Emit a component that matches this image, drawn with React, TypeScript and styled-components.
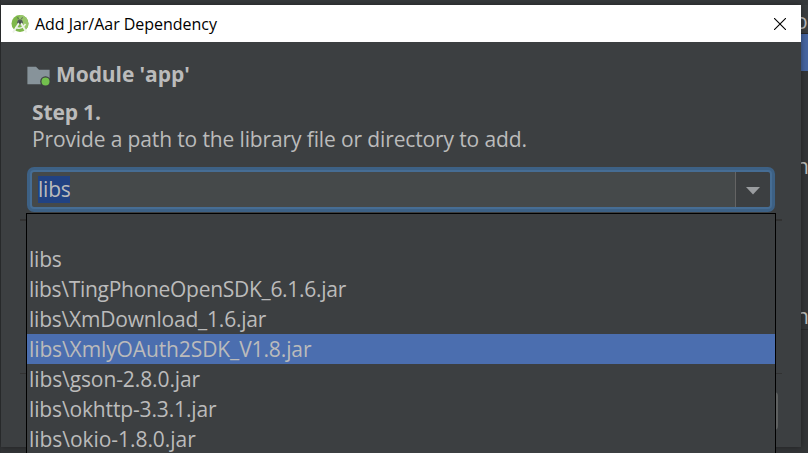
import React from "react";
import styled, { createGlobalStyle } from "styled-components";

const Global = createGlobalStyle`
  * { box-sizing: border-box; }
  body { margin: 0; overflow: hidden; background: #313335; }
`;

const Screen = styled.main`
  position: relative;
  width: 808px;
  height: 453px;
  padding: 5px 7px 6px 1px;
  overflow: hidden;
  background: #303234;
  color: #bbbbbb;
  font-family: "Open Sans", "Noto Sans", sans-serif;
  font-size: 21px;
`;

const Backdrop = styled.div`
  position: absolute;
  inset: 0 0 0 1px;
  display: grid;
  grid-template-rows: 5px 28px 1px 37px 258px 1px 1fr;
`;

const Band = styled.div<{ $color: string }>`
  position: relative;
  background: ${(p) => p.$color};
`;

const Glimpse = styled.span<{ $x: number; $y: number }>`
  position: absolute;
  left: ${(p) => p.$x}px;
  top: ${(p) => p.$y}px;
  line-height: 30px;
`;

const Dialog = styled.section`
  position: relative;
  height: 442px;
  width: 800px;
  display: flex;
  flex-direction: column;
  background: #3c3f41;
  box-shadow: 0 0 6px rgba(0, 0, 0, 0.4);
`;

const TitleBar = styled.header`
  height: 37px;
  flex: none;
  display: flex;
  align-items: center;
  padding: 0 15px 0 9px;
  background: #fff;
  color: #000;
`;

const Title = styled.h1<{ $spacing: number }>`
  flex: 1;
  margin: 0 0 0 5px;
  font-size: 16px;
  font-weight: 400;
  line-height: 22px;
  letter-spacing: ${(p) => p.$spacing}px;
`;

const Body = styled.div`
  flex: 1;
  display: flex;
  flex-direction: column;
  padding: 17px 19px 0;
`;

const ModuleRow = styled.div`
  display: flex;
  align-items: center;
  height: 30px;
  padding-left: 7px;
  gap: 5px;
`;

const FolderIcon = styled.svg`
  margin-top: 4px;
`;

const Strong = styled.div<{ $spacing: number }>`
  font-size: 21px;
  font-weight: 700;
  line-height: 28px;
  letter-spacing: ${(p) => p.$spacing}px;
`;

const Instructions = styled.div`
  margin: 9px 0 0 12px;
`;

const Line = styled.div<{ $spacing?: number }>`
  line-height: 26px;
  white-space: pre;
  letter-spacing: ${(p) => p.$spacing ?? 0}px;
`;

const Combo = styled.div`
  display: flex;
  width: 748px;
  height: 45px;
  margin: 15px 0 0 7px;
  padding: 2px;
  border: 3px solid #3d6185;
  border-radius: 7px;
  background: #466d94;
`;

const Field = styled.div`
  flex: 1;
  display: flex;
  align-items: center;
  padding-left: 6px;
  border-right: 1px solid #646464;
  border-radius: 2px 0 0 2px;
  background: #45494a;
`;

const Selection = styled.span`
  display: block;
  width: 32px;
  height: 27px;
  line-height: 27px;
  letter-spacing: -0.2px;
  background: #214283;
`;

const Arrow = styled.div`
  width: 34px;
  display: flex;
  align-items: center;
  justify-content: center;
  padding-top: 2px;
  border-radius: 0 2px 2px 0;
  background: #3c3f41;
`;

const Rule = styled.hr<{ $top: number; $height: number }>`
  width: 762px;
  height: ${(p) => p.$height}px;
  margin: ${(p) => p.$top}px 0 0;
  border: 0;
  background: #323232;
`;

const Button = styled.div`
  width: 110px;
  height: 38px;
  margin: 18px 4px 0 auto;
  border: 2px solid #5e6060;
  border-radius: 4px;
  background: #4c5052;
`;

const Popup = styled.ul`
  position: absolute;
  left: 26px;
  top: 213px;
  width: 750px;
  height: 260px;
  margin: 0;
  padding: 0;
  list-style: none;
  border: 1px solid #000;
  background: #3c3f41;
`;

const Option = styled.li<{ $selected: boolean; $spacing: number }>`
  height: 30px;
  padding-left: 2px;
  line-height: 30px;
  white-space: pre;
  letter-spacing: ${(p) => p.$spacing}px;
  background: ${(p) => (p.$selected ? "#4b6eaf" : "transparent")};
`;

const options = [
  { label: "", spacing: 0 },
  { label: "libs", spacing: -0.2 },
  { label: "libs\\TingPhoneOpenSDK_6.1.6.jar", spacing: -0.29 },
  { label: "libs\\XmDownload_1.6.jar", spacing: -0.21 },
  { label: "libs\\XmlyOAuth2SDK_V1.8.jar", spacing: -0.11, selected: true },
  { label: "libs\\gson-2.8.0.jar", spacing: -0.1 },
  { label: "libs\\okhttp-3.3.1.jar", spacing: -0.14 },
  { label: "libs\\okio-1.8.0.jar", spacing: -0.05 },
];

const StudioLogo = () => (
  <svg width="20" height="20" viewBox="0 0 20 20">
    <circle cx="10" cy="9.5" r="8.5" fill="#7fb84a" />
    <path d="M10 1a8.5 8.5 0 0 1 8.5 8.5c0 3-1.5 5.5-3.8 7L7 8Z" fill="#98c66a" />
    <path d="M7 8.2a3.1 3.8 0 0 1 6 0l-.8 2H7.8Z" fill="#56605a" />
    <path d="m7.6 3.3 1 2M12.4 3.3l-1 2" stroke="#56605a" strokeWidth="1" />
    <path d="M9 9 3 18.5M11 9l5.5 9.5" stroke="#eef2ea" strokeWidth="1.8" />
    <path d="M5.5 13.2c3.6 2 7.6.8 10-3.2" fill="none" stroke="#eef2ea" strokeWidth="1.6" />
    <circle cx="10" cy="8.5" r="1.3" fill="#46504a" />
  </svg>
);

const ModuleIcon = () => (
  <FolderIcon width="24" height="22" viewBox="0 0 24 22">
    <path d="M.4 1.8H9l3 3h10.6v14.4H.4Z" fill="#87939a" />
    <circle cx="18.5" cy="16.5" r="5.3" fill="#3c3f41" />
    <circle cx="18.5" cy="16.5" r="4" fill="#73c04e" />
  </FolderIcon>
);

export default function App() {
  return (
    <Screen>
      <Global />
      <Backdrop>
        <Band $color="#36393b" />
        <Band $color="#3a3d3f"><Glimpse $x={794} $y={1}>o</Glimpse></Band>
        <Band $color="#28292a" />
        <Band $color="#4665a0" />
        <Band $color="#333537"><Glimpse $x={795} $y={80}>n</Glimpse><Glimpse $x={795} $y={230}>n</Glimpse></Band>
        <Band $color="#292a2b" />
        <Band $color="#333537" />
      </Backdrop>
      <Dialog>
        <TitleBar>
          <StudioLogo />
          <Title $spacing={-0.03}>Add Jar/Aar Dependency</Title>
          <svg width="12" height="12" viewBox="0 0 12 12">
            <path d="m0 0 12 12M12 0 0 12" stroke="#000" strokeWidth="1.1" />
          </svg>
        </TitleBar>
        <Body>
          <ModuleRow>
            <ModuleIcon />
            <Strong $spacing={-0.08}>Module 'app'</Strong>
          </ModuleRow>
          <Instructions>
            <Strong $spacing={-0.15}>Step 1.</Strong>
            <Line $spacing={-0.13}>Provide a path to the library file or directory to add.</Line>
          </Instructions>
          <Combo>
            <Field><Selection>libs</Selection></Field>
            <Arrow>
              <svg width="14" height="8" viewBox="0 0 14 8"><path d="M0 0h14L7 7.5Z" fill="#9a9da0" /></svg>
            </Arrow>
          </Combo>
          <Rule $top={7} $height={2} />
          <Rule $top={152} $height={1} />
          <Button />
        </Body>
      </Dialog>
      <Popup>
        {options.map((o) => (
          <Option key={o.label} $selected={!!o.selected} $spacing={o.spacing}>{o.label}</Option>
        ))}
      </Popup>
    </Screen>
  );
}
